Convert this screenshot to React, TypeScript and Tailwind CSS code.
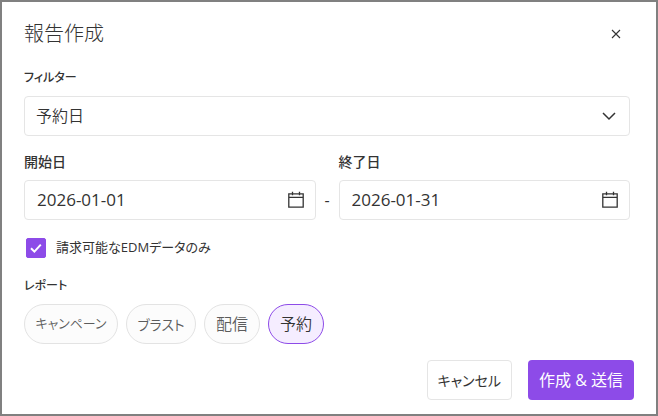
import { useState } from "react"

const reports = [
  { name: "キャンペーン", size: "w-[94px] text-[13px]" },
  { name: "ブラスト", size: "w-[70px] text-[14px]" },
  { name: "配信", size: "w-14 text-[16px]" },
  { name: "予約", size: "w-14 text-[16px]" },
]

function CalendarIcon() {
  return (
    <svg width="18" height="18" viewBox="0 0 18 18" fill="none" stroke="currentColor" strokeWidth="1.3" aria-hidden="true">
      <path d="M1.8 2.8h14.4v13.4H1.8zM1.8 6.4h14.4M5.5 .8v3.4M12.5 .8v3.4" />
    </svg>
  )
}

interface DateFieldProps {
  id: string
  label: string
  value: string
  onChange: (value: string) => void
}

function DateField({ id, label, value, onChange }: DateFieldProps) {
  return (
    <div className="min-w-0 flex-1">
      <label htmlFor={id} className="block text-[14px] leading-5 font-medium">{label}</label>
      <div className="mt-2 flex h-10 items-center rounded border border-[#e5e5e5] pr-2.5 pl-3">
        <input
          id={id}
          type="text"
          value={value}
          onChange={(e) => onChange(e.target.value)}
          className="min-w-0 flex-1 font-['Open_Sans',sans-serif] text-[17px] outline-none"
        />
        <button type="button" aria-label={`${label}を選択`}>
          <CalendarIcon />
        </button>
      </div>
    </div>
  )
}

export default function App() {
  const [filter, setFilter] = useState("予約日")
  const [start, setStart] = useState("2026-01-01")
  const [end, setEnd] = useState("2026-01-31")
  const [billableOnly, setBillableOnly] = useState(true)
  const [report, setReport] = useState("予約")

  return (
    <div className="min-h-screen border-2 border-[#808080] bg-white px-[22px] pt-4 pb-3.5 font-['Open_Sans','Noto_Sans_CJK_JP',sans-serif] text-[#333] [font-feature-settings:'palt']">
      <div className="pr-1">
        <header className="flex h-8 items-center justify-between">
          <h1 className="text-[20px] leading-8 font-light">報告作成</h1>
          <button type="button" aria-label="閉じる" className="mr-2">
            <svg width="12" height="12" viewBox="0 0 12 12" fill="none" stroke="currentColor" strokeWidth="1.1" aria-hidden="true">
              <path d="M2 2l8 8M10 2l-8 8" />
            </svg>
          </button>
        </header>

        <div className="mt-[18px]">
          <label htmlFor="filter" className="block text-[12px] leading-5 font-medium">フィルター</label>
          <div className="mt-2 grid">
            <select
              id="filter"
              value={filter}
              onChange={(e) => setFilter(e.target.value)}
              className="col-start-1 row-start-1 h-10 w-full appearance-none rounded border border-[#e5e5e5] pr-10 pl-[11px] text-[16px] font-[350]"
            >
              <option>予約日</option>
              <option>配信日</option>
            </select>
            <svg width="14" height="14" viewBox="0 0 14 14" fill="none" stroke="currentColor" strokeWidth="1.5" aria-hidden="true" className="pointer-events-none col-start-1 row-start-1 mr-3.5 self-center justify-self-end">
              <path d="M1 4l6 6 6-6" />
            </svg>
          </div>
        </div>

        <div className="mt-4 flex">
          <DateField id="start" label="開始日" value={start} onChange={setStart} />
          <span className="flex h-10 w-[23px] items-center justify-center self-end text-[16px]">-</span>
          <DateField id="end" label="終了日" value={end} onChange={setEnd} />
        </div>

        <label className="mt-4 flex h-6 items-center gap-2.5 pl-0.5 text-[13px]">
          <span className="grid size-5">
            <input
              type="checkbox"
              checked={billableOnly}
              onChange={(e) => setBillableOnly(e.target.checked)}
              className="peer col-start-1 row-start-1 size-5 appearance-none rounded-xs border border-[#8d4be8] checked:bg-[#8d4be8]"
            />
            <svg viewBox="0 0 20 20" fill="none" stroke="white" strokeWidth="2" aria-hidden="true" className="pointer-events-none invisible col-start-1 row-start-1 size-5 peer-checked:visible">
              <path d="M5 10.2l3.4 3.4 6.4-7" />
            </svg>
          </span>
          請求可能なEDMデータのみ
        </label>

        <fieldset className="mt-4">
          <legend className="text-[12px] leading-5 font-medium">レポート</legend>
          <div className="mt-2 flex gap-2">
            {reports.map(({ name, size }) => (
              <button
                key={name}
                type="button"
                aria-pressed={report === name}
                onClick={() => setReport(name)}
                className={`${size} h-10 rounded-full border border-[#e3e3e3] bg-[#fcfcfc] font-[350] whitespace-nowrap text-[#5c5c5c] aria-pressed:border-[#8d4be8] aria-pressed:bg-[#f5edff] aria-pressed:text-[#333]`}
              >
                {name}
              </button>
            ))}
          </div>
        </fieldset>
      </div>

      <footer className="mt-4 flex justify-end gap-4">
        <button type="button" className="h-10 rounded border border-[#e5e5e5] px-2.5 text-[14px]">キャンセル</button>
        <button type="button" className="h-10 rounded bg-[#8d4be8] px-[11px] text-[16px] text-white">作成 &amp; 送信</button>
      </footer>
    </div>
  )
}
